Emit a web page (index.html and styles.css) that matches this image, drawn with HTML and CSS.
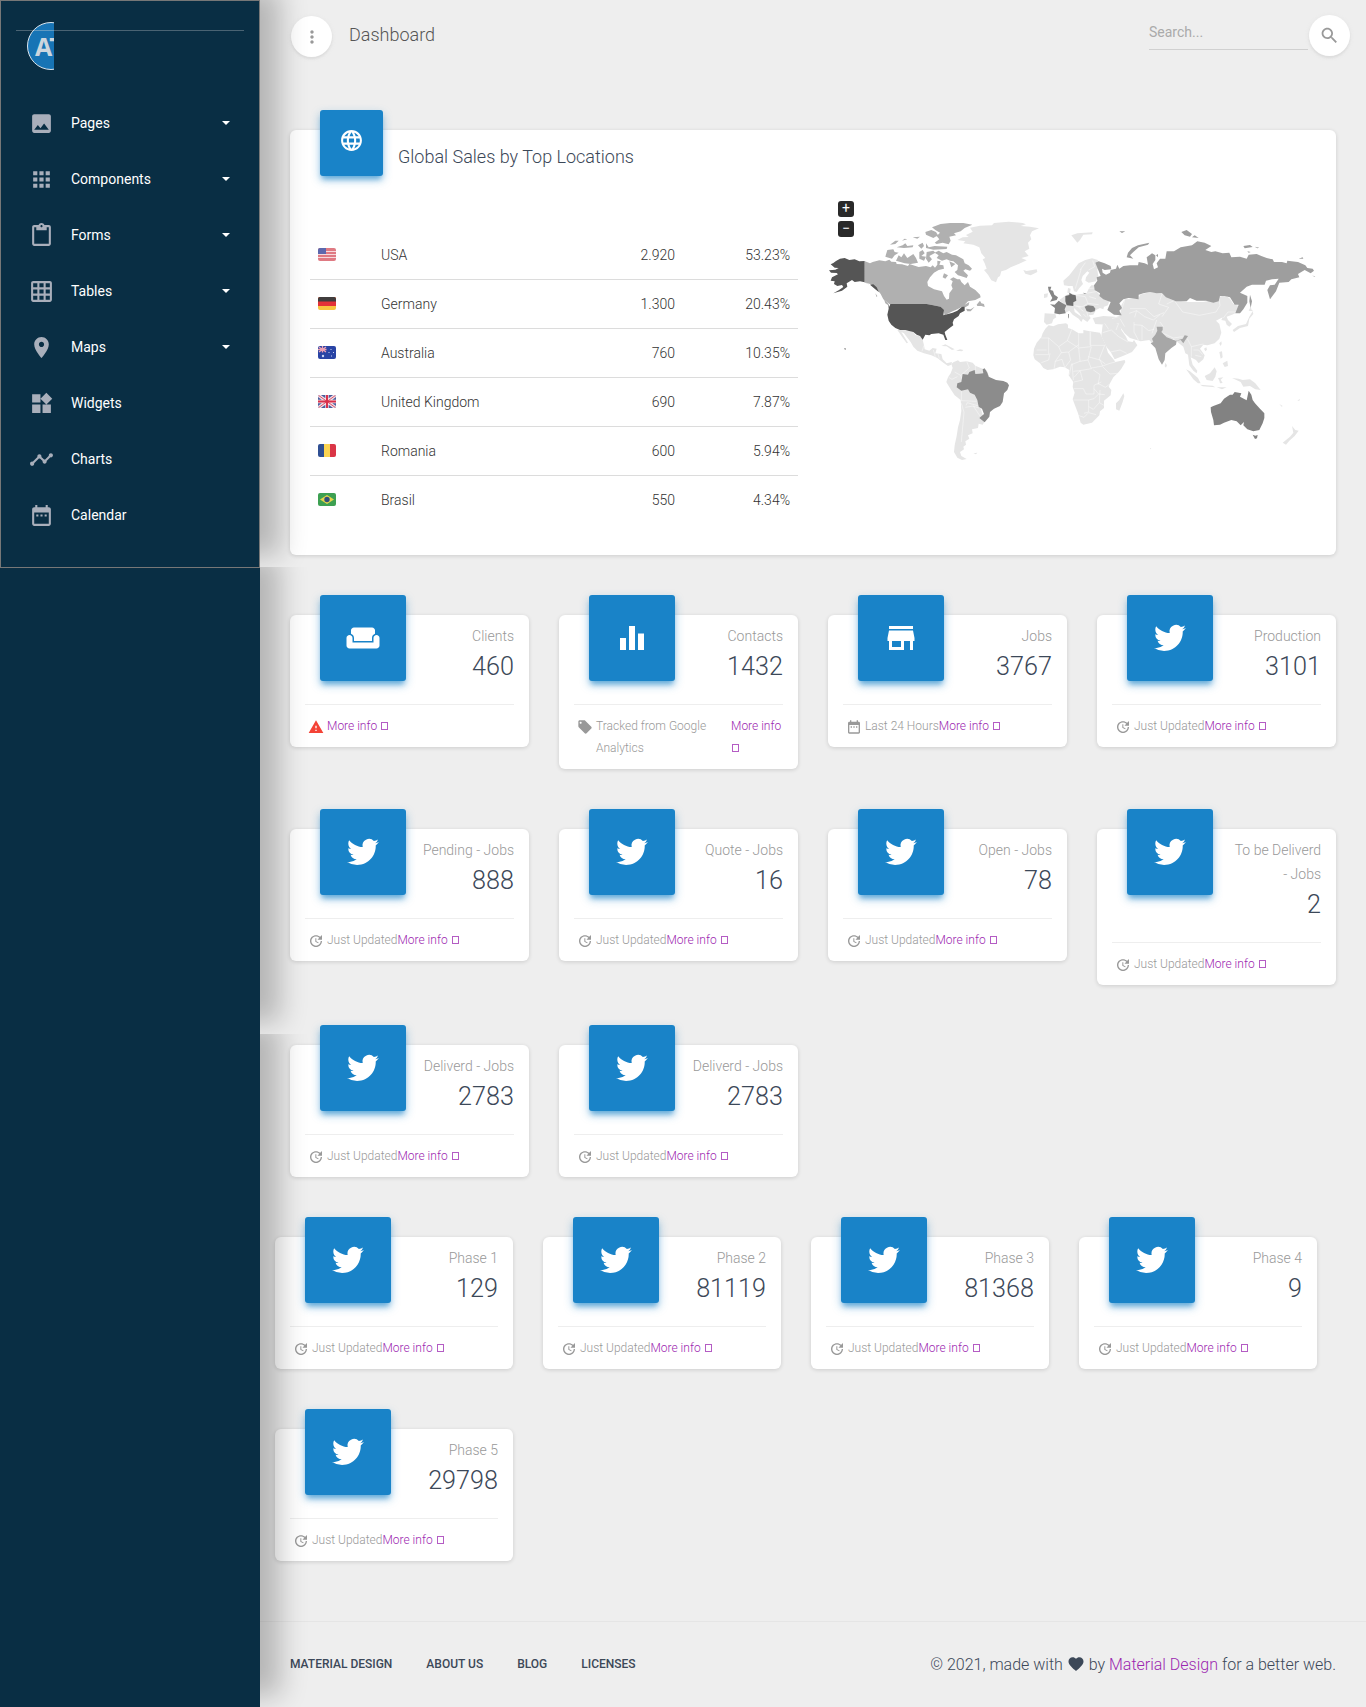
FILE: index.html
```html
<!DOCTYPE html>
<html lang="en">
<head>
<meta charset="utf-8">
<title>Dashboard</title>
<link rel="stylesheet" href="styles.css">
</head>
<body>
<svg class="sprite" aria-hidden="true">
  <symbol id="image" viewBox="0 0 24 24"><path d="M21 19V5c0-1.100-.9-2-2-2H5c-1.100 0-2 .9-2 2v14c0 1.100.9 2 2 2h14c1.100 0 2-.9 2-2zM8.500 13.500l2.500 3.010L14.500 12l4.500 6H5l3.500-4.500z"/></symbol>
  <symbol id="apps" viewBox="0 0 24 24"><path d="M4 8h4V4H4v4zm6 12h4v-4h-4v4zm-6 0h4v-4H4v4zm0-6h4v-4H4v4zm6 0h4v-4h-4v4zm6-10v4h4V4h-4zm-6 4h4V4h-4v4zm6 6h4v-4h-4v4zm0 6h4v-4h-4v4z"/></symbol>
  <symbol id="paste" viewBox="0 0 24 24"><path d="M19 2h-4.180C14.400.84 13.300 0 12 0c-1.300 0-2.400.84-2.820 2H5c-1.100 0-2 .9-2 2v16c0 1.100.9 2 2 2h14c1.100 0 2-.9 2-2V4c0-1.100-.9-2-2-2zm-7 0c.55 0 1 .45 1 1s-.45 1-1 1-1-.45-1-1 .45-1 1-1zm7 18H5V4h2v3h10V4h2v16z"/></symbol>
  <symbol id="grid" viewBox="0 0 24 24"><path d="M20 2H4c-1.100 0-2 .9-2 2v16c0 1.100.9 2 2 2h16c1.100 0 2-.9 2-2V4c0-1.100-.9-2-2-2zM8 20H4v-4h4v4zm0-6H4v-4h4v4zm0-6H4V4h4v4zm6 12h-4v-4h4v4zm0-6h-4v-4h4v4zm0-6h-4V4h4v4zm6 12h-4v-4h4v4zm0-6h-4v-4h4v4zm0-6h-4V4h4v4z"/></symbol>
  <symbol id="place" viewBox="0 0 24 24"><path d="M12 2C8.130 2 5 5.130 5 9c0 5.250 7 13 7 13s7-7.750 7-13c0-3.870-3.130-7-7-7zm0 9.500c-1.380 0-2.500-1.120-2.500-2.500s1.120-2.500 2.500-2.500 2.500 1.120 2.500 2.500-1.120 2.500-2.500 2.500z"/></symbol>
  <symbol id="widgets" viewBox="0 0 24 24"><path d="M13 13v8h8v-8h-8zM3 21h8v-8H3v8zM3 3v8h8V3H3zm13.660-1.310L11 7.340 16.660 13l5.660-5.660-5.660-5.650z"/></symbol>
  <symbol id="timeline" viewBox="0 0 24 24"><path d="M23 8c0 1.100-.9 2-2 2-.18 0-.35-.02-.51-.07l-3.560 3.550c.05.16.07.34.07.52 0 1.100-.9 2-2 2s-2-.9-2-2c0-.18.02-.36.07-.52l-2.550-2.550c-.16.05-.34.07-.52.07s-.36-.02-.52-.07l-4.550 4.560c.05.16.07.33.07.51 0 1.100-.9 2-2 2s-2-.9-2-2 .9-2 2-2c.18 0 .35.02.51.07l4.560-4.550C8.020 9.360 8 9.180 8 9c0-1.100.9-2 2-2s2 .9 2 2c0 .18-.02.36-.07.52l2.550 2.550c.16-.05.34-.07.52-.07s.36.02.52.07l3.550-3.560C19.020 8.350 19 8.180 19 8c0-1.100.9-2 2-2s2 .9 2 2z"/></symbol>
  <symbol id="date" viewBox="0 0 24 24"><path d="M9 11H7v2h2v-2zm4 0h-2v2h2v-2zm4 0h-2v2h2v-2zm2-7h-1V2h-2v2H8V2H6v2H5c-1.110 0-1.990.9-1.990 2L3 20c0 1.100.89 2 2 2h14c1.100 0 2-.9 2-2V6c0-1.100-.9-2-2-2zm0 16H5V9h14v11z"/></symbol>
  <symbol id="more" viewBox="0 0 24 24"><path d="M12 8c1.100 0 2-.9 2-2s-.9-2-2-2-2 .9-2 2 .9 2 2 2zm0 2c-1.100 0-2 .9-2 2s.9 2 2 2 2-.9 2-2-.9-2-2-2zm0 6c-1.100 0-2 .9-2 2s.9 2 2 2 2-.9 2-2-.9-2-2-2z"/></symbol>
  <symbol id="search" viewBox="0 0 24 24"><path d="M15.500 14h-.79l-.28-.27C15.410 12.590 16 11.110 16 9.500 16 5.910 13.090 3 9.500 3S3 5.910 3 9.500 5.910 16 9.500 16c1.610 0 3.090-.59 4.230-1.570l.27.28v.79l5 4.990L20.490 19l-4.990-5zm-6 0C7.010 14 5 11.990 5 9.500S7.010 5 9.500 5 14 7.010 14 9.500 11.990 14 9.500 14z"/></symbol>
  <symbol id="globe" viewBox="0 0 24 24"><path d="M11.990 2C6.470 2 2 6.480 2 12s4.470 10 9.990 10C17.520 22 22 17.520 22 12S17.520 2 11.990 2zm6.930 6h-2.950c-.32-1.250-.78-2.450-1.380-3.560 1.840.63 3.370 1.910 4.330 3.560zM12 4.040c.83 1.200 1.480 2.530 1.910 3.960h-3.820c.43-1.430 1.080-2.760 1.910-3.960zM4.260 14C4.100 13.360 4 12.690 4 12s.1-1.360.26-2h3.380c-.08.66-.14 1.320-.14 2 0 .68.06 1.340.14 2H4.260zm.82 2h2.950c.32 1.250.78 2.450 1.380 3.560-1.840-.63-3.370-1.900-4.330-3.560zm2.950-8H5.080c.96-1.660 2.490-2.930 4.330-3.560C8.810 5.550 8.350 6.750 8.030 8zM12 19.960c-.83-1.200-1.480-2.530-1.910-3.960h3.820c-.43 1.430-1.080 2.760-1.910 3.960zM14.340 14H9.660c-.09-.66-.16-1.320-.16-2 0-.68.07-1.350.16-2h4.680c.09.65.16 1.320.16 2 0 .68-.07 1.340-.16 2zm.25 5.560c.6-1.110 1.060-2.310 1.380-3.560h2.950c-.96 1.650-2.490 2.930-4.330 3.560zM16.360 14c.08-.66.14-1.320.14-2 0-.68-.06-1.340-.14-2h3.380c.16.64.26 1.310.26 2s-.1 1.360-.26 2h-3.380z"/></symbol>
  <symbol id="weekend" viewBox="0 0 24 24"><path d="M21 10c-1.100 0-2 .9-2 2v3H5v-3c0-1.100-.9-2-2-2s-2 .9-2 2v5c0 1.100.9 2 2 2h18c1.100 0 2-.9 2-2v-5c0-1.100-.9-2-2-2zm-3-5H6c-1.100 0-2 .9-2 2v2.150c1.160.41 2 1.510 2 2.820V14h12v-2.030c0-1.300.84-2.400 2-2.820V7c0-1.100-.9-2-2-2z"/></symbol>
  <symbol id="equalizer" viewBox="0 0 24 24"><path d="M10 20h4V4h-4v16zm-6 0h4v-8H4v8zM16 9v11h4V9h-4z"/></symbol>
  <symbol id="store" viewBox="0 0 24 24"><path d="M20 4H4v2h16V4zm1 10v-2l-1-5H4l-1 5v2h1v6h10v-6h4v6h2v-6h1zm-9 4H6v-4h6v4z"/></symbol>
  <symbol id="bird" viewBox="0 0 24 24"><path d="M23.950 4.570a10 10 0 01-2.820.78 4.960 4.960 0 002.160-2.730c-.95.56-2 .96-3.120 1.190a4.920 4.920 0 00-8.390 4.480C7.690 8.100 4.070 6.130 1.640 3.160a4.820 4.820 0 00-.67 2.480c0 1.710.87 3.210 2.190 4.090a4.900 4.900 0 01-2.230-.61v.06a4.920 4.920 0 003.950 4.820 5 5 0 01-2.210.09 4.940 4.940 0 004.600 3.420A9.870 9.870 0 010 19.540a14 14 0 007.550 2.210c9.050 0 14-7.500 14-13.990 0-.21 0-.42-.02-.63a9.940 9.940 0 002.420-2.560z"/></symbol>
  <symbol id="warning" viewBox="0 0 24 24"><path d="M1 21h22L12 2 1 21zm12-3h-2v-2h2v2zm0-4h-2v-4h2v4z"/></symbol>
  <symbol id="tag" viewBox="0 0 24 24"><path d="M21.410 11.580l-9-9C12.050 2.220 11.550 2 11 2H4c-1.100 0-2 .9-2 2v7c0 .55.22 1.050.59 1.420l9 9c.36.36.86.58 1.410.58.55 0 1.050-.22 1.410-.59l7-7c.37-.36.59-.86.59-1.410 0-.55-.23-1.060-.59-1.420zM5.500 7C4.670 7 4 6.330 4 5.500S4.670 4 5.500 4 7 4.670 7 5.500 6.330 7 5.500 7z"/></symbol>
  <symbol id="update" viewBox="0 0 24 24"><path d="M21 10.120h-6.780l2.740-2.820c-2.730-2.700-7.150-2.800-9.880-.1-2.730 2.710-2.730 7.080 0 9.790 2.730 2.710 7.150 2.710 9.880 0C18.320 15.650 19 14.080 19 12.100h2c0 1.980-.88 4.550-2.640 6.290-3.510 3.480-9.210 3.480-12.720 0-3.500-3.470-3.530-9.110-.02-12.580 3.510-3.470 9.140-3.470 12.650 0L21 3v7.120zM12.500 8v4.250l3.500 2.080-.72 1.210L11 13V8h1.500z"/></symbol>
  <symbol id="heart" viewBox="0 0 24 24"><path d="M12 21.350l-1.450-1.320C5.400 15.360 2 12.280 2 8.500 2 5.420 4.420 3 7.500 3c1.740 0 3.410.81 4.500 2.090C13.090 3.810 14.760 3 16.500 3 19.580 3 22 5.420 22 8.500c0 3.780-3.400 6.860-8.550 11.540L12 21.350z"/></symbol>
</svg>

<div class="layout">
  <aside class="sidebar">
    <div class="sidebar-shade shade-first"></div>
    <div class="sidebar-shade shade-second"></div>
    <div class="sidebar-shade shade-third"></div>
    <div class="sidebar-panel">
      <div class="brand"><div class="logo"><span class="logo-disc">AT</span></div></div>
      <nav class="nav">
        <a class="nav-item"><svg><use href="#image"/></svg><span>Pages</span><i class="caret"></i></a>
        <a class="nav-item"><svg><use href="#apps"/></svg><span>Components</span><i class="caret"></i></a>
        <a class="nav-item"><svg><use href="#paste"/></svg><span>Forms</span><i class="caret"></i></a>
        <a class="nav-item"><svg><use href="#grid"/></svg><span>Tables</span><i class="caret"></i></a>
        <a class="nav-item"><svg><use href="#place"/></svg><span>Maps</span><i class="caret"></i></a>
        <a class="nav-item"><svg><use href="#widgets"/></svg><span>Widgets</span></a>
        <a class="nav-item"><svg><use href="#timeline"/></svg><span>Charts</span></a>
        <a class="nav-item"><svg><use href="#date"/></svg><span>Calendar</span></a>
      </nav>
    </div>
  </aside>

  <main class="main">
    <header class="topbar">
      <button class="round menu"><svg><use href="#more"/></svg></button>
      <h1>Dashboard</h1>
      <div class="search">Search...</div>
      <button class="round"><svg class="find"><use href="#search"/></svg></button>
    </header>

    <section class="sales card">
      <div class="sales-head">
        <div class="tile tile-small"><svg><use href="#globe"/></svg></div>
        <h2>Global Sales by Top Locations</h2>
      </div>
      <div class="sales-body">
        <div class="table">
          <div class="row"><svg class="flag" viewBox="0 0 18 13"><rect width="18" height="13" fill="#df7a83"/><path d="M0 3.500h18M0 6.500h18M0 9.500h18" stroke="#f6dadd" stroke-width="1.200"/><rect width="8" height="6" fill="#5d68ad"/></svg><span class="name">USA</span><span>2.920</span><span>53.23%</span></div>
          <div class="row"><svg class="flag" viewBox="0 0 18 13"><rect width="18" height="13" fill="#f8c540"/><rect width="18" height="9" fill="#e33238"/><rect width="18" height="4.500" fill="#403d3d"/></svg><span class="name">Germany</span><span>1.300</span><span>20.43%</span></div>
          <div class="row"><svg class="flag" viewBox="0 0 18 13"><rect width="18" height="13" fill="#2944a5"/><path d="M1 1l7 5M8 1L1 6M4.500 0v6.500M0 3.500h8.500" stroke="#eba0b4" stroke-width="1.300"/><circle cx="5" cy="10" r="1.200" fill="#ccd5f2"/><path d="M13 3v1M11 6v1M15.500 6v1M13.500 9.500v1" stroke="#ccd5f2"/></svg><span class="name">Australia</span><span>760</span><span>10.35%</span></div>
          <div class="row"><svg class="flag" viewBox="0 0 18 13"><rect width="18" height="13" fill="#4c5e9e"/><path d="M0 0l18 13M18 0L0 13M9 0v13M0 6.500h18" stroke="#f2dfe5" stroke-width="3.400"/><path d="M0 0l18 13M18 0L0 13" stroke="#d9425c" stroke-width=".9"/><path d="M9 0v13M0 6.500h18" stroke="#d9304b" stroke-width="2"/></svg><span class="name">United Kingdom</span><span>690</span><span>7.87%</span></div>
          <div class="row"><svg class="flag" viewBox="0 0 18 13"><rect width="6" height="13" fill="#2f4f93"/><rect x="6" width="6" height="13" fill="#fbd452"/><rect x="12" width="6" height="13" fill="#da3546"/></svg><span class="name">Romania</span><span>600</span><span>5.94%</span></div>
          <div class="row"><svg class="flag" viewBox="0 0 18 13"><rect width="18" height="13" fill="#3da052"/><path d="M9 2l7 4.500L9 11 2 6.500z" fill="#e6d44b"/><circle cx="9" cy="6.500" r="2.700" fill="#304f7a"/></svg><span class="name">Brasil</span><span>550</span><span>4.34%</span></div>
        </div>
        <div class="map">
          <svg viewBox="0 0 1530 870">
            <g class="land">
              <path d="M232 420L256 421 280 427 286 435 300 439 308 449 312 466 314 478 328 482 338 474 350 476 346 490 364 492 368 508 380 520 396 516 394 524 384 528 370 518 352 504 334 496 312 490 292 482 280 470 272 456 252 430 244 426 264 458 260 460 246 440Z"/>
              <path d="M364 468L376 463 404 478 396 480 380 469ZM408 482L420 478 430 480 426 484ZM460 790l12-2-4 5z"/>
              <path d="M394 522L400 517 414 511 420 516 440 514 458 518 466 527 484 535 500 541 508 560 500 620 480 648 494 694 488 704 476 701 474 714 456 718 458 730 444 736 448 746 436 754 438 764 430 770 432 778 420 786 424 798 440 807 426 810 412 803 402 786 404 766 410 738 414 712 420 690 424 662 422 630 404 616 396 604 386 588 379 576 384 562 392 550 398 534Z"/>
              <path d="M412 150L428 142 446 141 438 135 458 125 450 113 480 107 516 106 522 99 566 95 608 99 618 103 602 108 630 110 657 115 636 124 630 136 634 148 624 158 628 176 614 184 626 198 604 204 620 211 596 222 572 232 558 240 544 244 540 258 534 262 528 277 514 271 504 254 492 240 500 236 494 220 488 208 496 204 484 190 478 172 460 164 430 160 436 154Z"/>
              <path d="M610 240L620 243 650 238 652 246 632 256 616 251ZM672 312l12-2-2 12-10 2z"/>
              <path d="M674 370L706 372 709 382 700 388 696 400 680 404 672 396Z"/>
              <path d="M732 286L730 272 748 256 762 238 776 220 796 210 816 205 834 210 832 218 840 224 832 240 835 258 828 274 806 278 796 272 798 262 808 248 802 244 788 258 784 270 789 282 778 294 770 306 762 304 758 288 746 288ZM744 294l8 2-2 14-8-2z"/>
              <path d="M718 330L738 316 750 310 768 314 800 310 806 296 814 286 826 286 828 302 842 318 868 332 864 346 852 350 850 358 840 354 828 360 820 374 806 376 812 384 802 396 790 388 778 370 762 354 764 366 790 384 784 396 776 386 758 374 748 362 734 370 736 346Z"/>
              <path d="M818 384L850 378 884 380 902 386 898 398 858 404 826 402Z"/>
              <path d="M676 416L686 406 700 409 714 403 738 400 744 404 744 414 756 418 776 430 790 430 790 420 810 424 840 428 846 442 856 462 864 488 882 510 886 516 914 510 916 516 904 536 896 546 880 562 870 580 866 590 874 600 872 616 852 632 852 654 840 664 838 676 816 698 790 704 782 698 774 670 768 654 758 628 764 608 758 590 760 576 746 556 748 540 734 532 720 530 700 538 682 540 670 534 660 520 644 508 640 496 642 476 650 458 664 442 668 430Z"/>
              <path d="M888 640L898 630 910 610 913 618 908 636 898 662 888 658Z"/>
              <path d="M848 404L856 399 880 397 900 402 904 420 918 440 924 454 938 456 942 450 952 466 936 486 914 496 884 508 872 486 860 472 844 438Z"/>
              <path d="M888 382L902 374 902 350 914 328 956 326 960 314 990 306 1026 312 1066 330 1100 336 1150 336 1196 326 1198 320 1216 316 1230 326 1240 342 1258 348 1254 366 1236 374 1220 380 1224 390 1236 402 1228 410 1220 404 1216 392 1204 390 1208 382 1188 392 1198 402 1204 428 1198 446 1184 460 1162 466 1150 464 1140 476 1154 496 1150 508 1136 520 1128 510 1112 502 1118 524 1132 542 1130 550 1120 542 1108 526 1104 494 1096 490 1090 470 1060 446 1020 456 996 460 988 450 962 454 930 444 914 430 900 410 892 396Z"/>
              <path d="M1036 518l5 8-3 7-4-4zM1152 476l7-4 2 7-5 5zM1198 460l6-6 1 8-4 6z"/>
              <path d="M1098 538L1110 544 1134 564 1142 580 1134 580 1120 568 1106 548ZM1140 584L1178 587 1186 592 1148 589ZM1154 558L1170 550 1184 532 1190 544 1186 560 1178 573 1160 570ZM1194 564l16-2-8 7 6 10-8 1-2-8zM1190 592l30 0-14 6zM1236 564L1256 566 1268 570 1290 568 1306 580 1322 600 1306 598 1290 588 1270 590 1262 576ZM1198 486l8-2 2 18-6 4zM1208 520l14-8 2 16-10 3z"/>
              <path d="M1238 420L1254 408 1278 402 1288 380 1298 364 1300 372 1288 386 1284 408 1260 414 1242 426ZM1286 362l6-12 3 10 6 4z"/>
              <path d="M1416 708L1426 720 1436 722 1424 738 1408 752 1398 764 1388 758 1410 740 1420 728Z"/>
              <path d="M754 136L772 130 818 127 816 133 790 134 780 150 772 158ZM1378 642l10 6-3 2zM1432 632l8-6-2 6zM990 774l4 2-4 2z"/>
            </g>
            <g class="borders">
              <path d="M404 546l18 10 6 18-18 14M424 602l0 30 46 2M424 640l8 26-8 90M436 652l24-4 16 6M438 646l4-8 34 10M460 648l20 30M466 526l0 14M440 514l8 20-26 22M386 562l10 6 16-8M312 466l-6 18M340 480l6 20M354 492l4 14"/>
              <path d="M686 444l30 26 26-18 14-36M686 444l-22 0M686 444l0 50-40 0M690 490l-4 20-22 8M716 470l8 18 22-2 30-22M742 452l34 22 36-4 0-44M776 430l0 42M724 488l-18 26-4 24M746 486l6 24-20 26M706 514l20-6 8 24M812 466l42 0M776 474l4 40 24-4 10-40M780 514l-26 10-6 30M804 510l10 26-34 6-18 20M804 500l36 10 16 12M854 466l-16 40 10 22 22-8 16-4M848 528l-34 6M848 530l22 22 22-2M820 540l20 14-6 30M780 542l8 28-26 6M762 596l28 0 8 16 24 0 0-26 22-10M834 580l22 12 14-10M760 630l46 0 0 36-14 4M806 630l16-4 14-14 18 2M806 650l14 8 18-20 14 8M774 676l18 6 14-14 22 6M822 596l14 16M840 600l-2 38M760 544l20-2M756 520l4 50M650 480l30 0M810 424l0 42"/>
              <path d="M848 428l26-8 22 20 28 16M872 486l28-6 20 10M854 400l12 18M896 400l-8 20M900 386l14 24M942 404l24 2 20 16 16-4M942 396l0 30 14 26M966 406l0 44M928 370l22-8 24 18 26 10 20-16M914 330l-8 26M930 356l46 0 26 24 30-12M950 362l-6 20M1026 312l-10 30 30 10-20 28M1040 342l22-10M1066 336l22 30 50 10 50-10 12-20M1200 346l-4-24M1010 390l-14 40M1020 396l10 14M1030 430l30 14 28-4M1102 446l12 24 18-4 18-4M1114 470l0 30M1120 480l16 0 12 14M1126 496l18 4M1210 384l14-18 30 0"/>
              <path d="M768 316l28 4 8 20-16 10-20-2M804 340l32 4M800 310l32-6M760 346l24 6M784 236l-18 60M796 218l-16 22M818 212l6 18-18 10M804 296l22-2M828 326l-20-6M790 372l10 10M800 364l4 16M774 350l16 14M876 386l20-6"/>
            </g>
            <g class="canada">
              <path d="M135 214L150 220 158 216 178 211 196 214 208 209 214 215 228 216 230 222 246 223 264 228 268 222 296 231 318 228 332 232 338 226 345 233 352 224 352 212 362 214 358 224 370 226 372 236 356 240 342 248 330 262 322 276 324 288 342 298 366 304 372 318 380 329 387 326 388 310 398 296 394 286 398 274 390 268 400 262 412 268 420 268 424 276 434 286 444 276 450 290 466 300 480 314 482 322 466 330 444 334 434 344 448 336 446 346 436 352 426 350 412 358 398 364 374 376 370 360 362 350 340 346 320 342 208 342 190 328 182 312 166 292 150 282 135 277Z"/>
              <path d="M470 344l10-12 4 8 8 2 2 9-10-3-12 0zM438 356l14 2 12-8-12 14-10 0zM192 328l12 12 4 8-12-8zM166 310l6 8-2 4z"/>
              <path d="M344 188L356 182 370 190 380 186 396 194 408 196 430 208 434 220 446 226 456 236 450 242 436 238 430 242 444 256 440 264 422 258 414 256 404 246 412 240 414 226 400 214 390 212 380 208 366 212 350 204 356 196Z"/>
              <path d="M336 112L362 102 390 99 430 99 457 104 434 114 422 124 402 130 408 136 388 140 392 152 386 163 368 158 350 162 344 158 358 148 350 138 360 128 346 120ZM316 126L334 120 348 126 354 136 340 144 318 134ZM318 160L326 172 344 168 382 170 380 177 340 179 318 174Z"/>
              <path d="M202 180l18-2 4 8 12 2-12 8-8 10-20-6zM228 212l8-16 8 6 8-12 10 14 18-12 8 12 6 14-22 4-18-2zM210 164l16-12 10 0-10 10zM230 172l18-6 8-6 6 8 18-2-2 6-26 2zM246 152l8-6 8 2zM278 142l22-2-8 6zM294 166l14-8 4 10-8 8zM298 186l10-6 6 10-10 8 14 2-6 12-14-6zM320 186l20-4 6 6-18 10 8 10-10 10-8-12zM372 250l12 6-8 10-8-4zM388 214l18 8-12 10z"/>
            </g>
            <path class="usa" d="M134 213L118 214 104 208 88 210 74 204 60 206 48 213 40 219 32 223 44 233 56 234 46 239 27 241 33 248 50 249 54 253 36 262 32 272 44 274 42 282 52 288 66 285 70 291 56 301 40 310 66 302 82 290 80 280 96 270 104 276 120 274 134 277 150 284 164 296 177 307 170 292 160 283 150 284 134 276ZM205 342L208 350 211 342 320 342 340 346 362 350 372 360 370 376 398 368 412 362 426 350 434 350 434 362 420 370 416 378 402 388 398 398 400 406 386 416 374 426 376 434 382 450 376 450 370 434 356 430 334 432 328 436 316 434 308 449 300 438 290 434 280 426 270 424 256 420 240 420 226 414 214 404 206 392 202 374 206 356ZM73 474l5 2-3 4z"/>
            <path class="brazil" d="M428 552L444 554 448 546 464 540 466 552 478 551 490 550 488 538 494 535 502 548 506 560 528 570 550 573 562 578 567 586 562 600 552 610 548 636 540 648 522 656 510 666 508 680 494 697 478 684 492 672 486 656 476 650 472 630 464 614 450 608 444 598 424 602 410 592 412 580 424 576Z"/>
            <path class="britain" d="M684 290L694 290 691 300 699 302 703 314 714 322 710 330 690 335 697 324 692 314 686 302ZM690 343L704 344 716 332 728 340 739 346 734 358 737 370 718 373 703 370 705 354Z"/>
            <path class="germany" d="M736 318L748 315 748 308 758 314 767 316 769 332 760 337 760 348 740 346 736 334ZM745 372l2 0 0 10-2 4z"/>
            <path class="britain" d="M794 350L804 346 820 348 826 356 824 364 812 367 800 364Z"/>
            <path class="india" d="M992 460L1000 456 996 446 1006 434 1012 422 1010 410 1028 410 1028 420 1024 426 1040 442 1068 452 1088 446 1094 436 1104 438 1096 450 1090 460 1082 450 1070 452 1068 464 1054 474 1036 490 1034 510 1026 524 1016 508 1006 474Z"/>
            <g class="russia" transform="translate(750 0)">
              <path d="M76 218L86 214 104 220 122 228 124 238 104 240 96 236 98 248 108 254 120 248 122 240 138 236 142 224 148 236 160 228 180 226 204 226 206 216 224 220 234 224 230 202 246 190 256 196 256 210 248 222 252 238 264 232 260 220 270 206 286 206 290 184 312 184 332 172 366 166 382 154 404 158 424 168 406 180 424 186 436 184 458 190 478 188 484 202 510 200 530 206 536 194 560 192 574 198 590 204 608 208 612 216 636 216 650 220 652 212 684 216 706 226 712 234 728 236 732 242 722 250 704 240 684 252 688 262 664 268 656 276 628 278 618 304 600 328 592 300 600 286 614 284 626 266 606 268 588 272 584 284 546 284 530 290 510 308 532 318 532 338 520 358 510 370 496 370 506 344 494 344 480 322 464 318 450 318 446 334 430 338 408 332 380 332 360 324 350 334 318 334 288 322 276 310 260 310 240 306 220 310 206 314 206 328 176 324 160 328 148 340 156 354 148 362 155 376 132 374 112 360 122 336 100 328 88 318 90 310 74 300 72 286 82 272 80 262 92 258Z"/>
              <path d="M170 202L174 188 186 174 204 166 238 158 234 164 206 172 190 186 180 196 190 206ZM334 126L350 120 366 132 360 140 344 136ZM366 142L374 136 386 144ZM520 168l20-3 8 6-24 4zM554 170l14 3-6 2zM532 184l10 2-6 2zM258 196l6-4 0 10zM540 314l6 20-4 20-4-20zM148 124l18 0-10 5zM686 206l12-4 2 4zM726 256l10 4-2 1zM38 308l12 2-6 2z"/>
            </g>
            <path class="australia" transform="translate(750 0)" d="M422 652L430 648 452 640 462 626 474 618 480 614 488 614 494 606 514 610 510 620 530 631 536 602 544 614 548 630 555 640 570 656 583 670 583 684 578 700 568 720 550 724 532 718 520 706 522 696 512 706 500 694 484 690 462 698 450 704 432 706 430 690 423 666ZM548 734l8 3 7-2-2 10-6 2z"/>
          </svg>
          <div class="zoom-in">+</div><div class="zoom-out">−</div>
        </div>
      </div>
    </section>

    <section class="stats">
      <article class="card stat"><div class="stat-head"><div class="tile"><svg><use href="#weekend"/></svg></div><div class="figures"><p>Clients</p><h3>460</h3></div></div><div class="stat-foot"><svg class="danger"><use href="#warning"/></svg><a>More info <i class="box"></i></a></div></article>
      <article class="card stat"><div class="stat-head"><div class="tile"><svg><use href="#equalizer"/></svg></div><div class="figures"><p>Contacts</p><h3>1432</h3></div></div><div class="stat-foot"><svg><use href="#tag"/></svg><span class="long">Tracked from Google Analytics</span><a>More info <i class="box"></i></a></div></article>
      <article class="card stat"><div class="stat-head"><div class="tile"><svg><use href="#store"/></svg></div><div class="figures"><p>Jobs</p><h3>3767</h3></div></div><div class="stat-foot"><svg><use href="#date"/></svg><span>Last 24 Hours</span><a>More info <i class="box"></i></a></div></article>
      <article class="card stat"><div class="stat-head"><div class="tile"><svg class="bird"><use href="#bird"/></svg></div><div class="figures"><p>Production</p><h3>3101</h3></div></div><div class="stat-foot"><svg><use href="#update"/></svg><span>Just Updated</span><a>More info <i class="box"></i></a></div></article>
    </section>
    <section class="stats">
      <article class="card stat"><div class="stat-head"><div class="tile"><svg class="bird"><use href="#bird"/></svg></div><div class="figures"><p>Pending - Jobs</p><h3>888</h3></div></div><div class="stat-foot"><svg><use href="#update"/></svg><span>Just Updated</span><a>More info <i class="box"></i></a></div></article>
      <article class="card stat"><div class="stat-head"><div class="tile"><svg class="bird"><use href="#bird"/></svg></div><div class="figures"><p>Quote - Jobs</p><h3>16</h3></div></div><div class="stat-foot"><svg><use href="#update"/></svg><span>Just Updated</span><a>More info <i class="box"></i></a></div></article>
      <article class="card stat"><div class="stat-head"><div class="tile"><svg class="bird"><use href="#bird"/></svg></div><div class="figures"><p>Open - Jobs</p><h3>78</h3></div></div><div class="stat-foot"><svg><use href="#update"/></svg><span>Just Updated</span><a>More info <i class="box"></i></a></div></article>
      <article class="card stat"><div class="stat-head"><div class="tile"><svg class="bird"><use href="#bird"/></svg></div><div class="figures"><p>To be Deliverd - Jobs</p><h3>2</h3></div></div><div class="stat-foot"><svg><use href="#update"/></svg><span>Just Updated</span><a>More info <i class="box"></i></a></div></article>
    </section>
    <section class="stats">
      <article class="card stat"><div class="stat-head"><div class="tile"><svg class="bird"><use href="#bird"/></svg></div><div class="figures"><p>Deliverd - Jobs</p><h3>2783</h3></div></div><div class="stat-foot"><svg><use href="#update"/></svg><span>Just Updated</span><a>More info <i class="box"></i></a></div></article>
      <article class="card stat"><div class="stat-head"><div class="tile"><svg class="bird"><use href="#bird"/></svg></div><div class="figures"><p>Deliverd - Jobs</p><h3>2783</h3></div></div><div class="stat-foot"><svg><use href="#update"/></svg><span>Just Updated</span><a>More info <i class="box"></i></a></div></article>
    </section>
    <section class="stats phases">
      <article class="card stat"><div class="stat-head"><div class="tile"><svg class="bird"><use href="#bird"/></svg></div><div class="figures"><p>Phase 1</p><h3>129</h3></div></div><div class="stat-foot"><svg><use href="#update"/></svg><span>Just Updated</span><a>More info <i class="box"></i></a></div></article>
      <article class="card stat"><div class="stat-head"><div class="tile"><svg class="bird"><use href="#bird"/></svg></div><div class="figures"><p>Phase 2</p><h3>81119</h3></div></div><div class="stat-foot"><svg><use href="#update"/></svg><span>Just Updated</span><a>More info <i class="box"></i></a></div></article>
      <article class="card stat"><div class="stat-head"><div class="tile"><svg class="bird"><use href="#bird"/></svg></div><div class="figures"><p>Phase 3</p><h3>81368</h3></div></div><div class="stat-foot"><svg><use href="#update"/></svg><span>Just Updated</span><a>More info <i class="box"></i></a></div></article>
      <article class="card stat"><div class="stat-head"><div class="tile"><svg class="bird"><use href="#bird"/></svg></div><div class="figures"><p>Phase 4</p><h3>9</h3></div></div><div class="stat-foot"><svg><use href="#update"/></svg><span>Just Updated</span><a>More info <i class="box"></i></a></div></article>
      <article class="card stat"><div class="stat-head"><div class="tile"><svg class="bird"><use href="#bird"/></svg></div><div class="figures"><p>Phase 5</p><h3>29798</h3></div></div><div class="stat-foot"><svg><use href="#update"/></svg><span>Just Updated</span><a>More info <i class="box"></i></a></div></article>
    </section>

    <footer class="footer">
      <nav><a>Material Design</a><a>About us</a><a>Blog</a><a>Licenses</a></nav>
      <p>© 2021, made with <svg><use href="#heart"/></svg> by <a>Material Design</a> for a better web.</p>
    </footer>
  </main>
</div>
</body>
</html>
```

FILE: styles.css
```css
* { box-sizing: border-box; }
body { margin: 0; background: #eee; color: #3c4858; font-family: Roboto, "Liberation Sans", sans-serif; font-weight: 300; font-size: 14px; }
h1, h2, h3, p { margin: 0; font-weight: 300; }
svg { fill: currentColor; display: block; flex: none; }
.sprite { display: none; }
.layout { display: grid; grid-template-columns: 260px 1fr; height: 1707px; overflow: hidden; }

/* sidebar */
.sidebar { position: relative; z-index: 2; background: #092e44; }
.sidebar-shade { position: absolute; left: 0; width: 260px; z-index: -1; clip-path: inset(0 -60px 0 0); box-shadow: 20px -11px 26px rgba(0,0,0,.24); }
.shade-first { top: 0; height: 567px; }
.shade-second { top: 567px; height: 467px; }
.shade-third { top: 1034px; height: 673px; }
.sidebar-panel { height: 568px; border: 1px solid #777; background: #092e44; color: #fff; }
.brand { height: 94px; margin: 0 15px; padding: 21px 0 0 11px; background: linear-gradient(#4a6373, #4a6373) 0 29px / 100% 1px no-repeat; }
.logo { width: 27px; height: 48px; overflow: hidden; }
.logo-disc { display: block; width: 48px; height: 48px; padding-left: 7px; border: 1px solid #dce6ee; border-radius: 50%; background: linear-gradient(#5f9ac2, #5f9ac2) 0 7px / 100% 1px no-repeat #1774b5; color: #ccd6de; font: 700 25px/46px "Open Sans", sans-serif; letter-spacing: -3px; }
.nav-item { display: flex; align-items: center; height: 56px; padding: 0 29px 0 28px; font-weight: 400; }
.nav-item svg { width: 25px; height: 25px; margin-right: 17px; color: #a9afbb; }
.nav-item span { flex: 1; }
.caret { border: 4px solid transparent; border-top-color: #fff; border-bottom: 0; }

/* top bar */
.main { min-width: 0; }
.topbar { display: flex; align-items: flex-start; height: 130px; padding: 15px 16px 0 31px; }
.round { display: flex; align-items: center; justify-content: center; width: 41px; height: 41px; padding: 0; border: 0; border-radius: 50%; background: #fff; color: #999; box-shadow: 0 2px 2px rgba(153,153,153,.14), 0 1px 5px rgba(153,153,153,.12); }
.round svg { width: 20px; height: 20px; }
.round .find { width: 21px; height: 21px; }
.menu { margin-top: 1px; }
.topbar h1 { flex: 1; margin-left: 17px; font-size: 18px; line-height: 40px; color: #555; }
.search { width: 159px; height: 35px; margin-right: 1px; border-bottom: 1px solid #d0d0d0; color: #aaa; font-weight: 400; line-height: 34px; }

/* cards */
.card { border-radius: 6px; background: #fff; box-shadow: 0 1px 4px rgba(0,0,0,.14); }
.tile { display: flex; align-items: center; justify-content: center; width: 86px; height: 86px; margin: -20px 15px 0; border-radius: 3px; background: #1983c8; color: #fff; box-shadow: 0 4px 10px rgba(25,131,200,.4), 0 5px 5px -2px rgba(25,131,200,.5); flex: none; }
.tile svg { width: 36px; height: 36px; }
.tile .bird { width: 32px; height: 32px; }
.sales { height: 425px; margin: 0 30px; padding: 0 15px; }
.sales-head { display: flex; height: 60px; }
.tile-small { width: 63px; height: 66px; padding-bottom: 5px; }
.tile-small svg { width: 25px; height: 25px; }
.sales-head h2 { font-size: 18px; line-height: 54px; }
.sales-body { display: flex; padding-left: 5px; }
.table { flex: none; width: 488px; margin-top: 41px; color: #333; }
.row { display: grid; grid-template-columns: 63px 186px 108px 115px; align-items: center; height: 49px; padding: 0 0 1px 8px; border-bottom: 1px solid #dcdcdc; text-align: right; }
.row:last-child { border-bottom-color: transparent; }
.row .name { text-align: left; }
.flag { width: 18px; height: 13px; border-radius: 2px; }
.map { position: relative; flex: none; width: 510px; height: 290px; margin-left: 22px; }
.map svg { width: 510px; height: 290px; }
.land { fill: #e5e5e5; }
.borders { fill: none; stroke: #fff; stroke-width: 1.3; stroke-linejoin: round; }
.canada { fill: #b0b0b0; }
.usa { fill: #555; }
.brazil { fill: #8c8c8c; }
.britain { fill: #868686; }
.germany { fill: #6e6e6e; }
.india { fill: #a7a7a7; }
.russia { fill: #9e9e9e; }
.australia { fill: #828282; }
.zoom-in, .zoom-out { position: absolute; left: 18px; width: 16px; height: 16px; border-radius: 3px; background: #292929; color: #fff; font-weight: 400; line-height: 15px; text-align: center; }
.zoom-in { top: 11px; }
.zoom-out { top: 31px; }

.stats { display: flex; flex-wrap: wrap; align-items: flex-start; gap: 60px 30px; margin: 60px 30px 0; }
.phases { margin-left: 15px; }
.stat { width: 239px; padding: 0 15px; }
.phases .stat { width: 238px; }
.stat-head { display: flex; padding-bottom: 20px; }
.figures { flex: 1; padding-top: 9px; text-align: right; }
.figures p { color: #999; line-height: 24px; }
.figures h3 { padding-top: 1px; font-size: 25.2px; line-height: 35px; }
.stat-foot { display: flex; padding: 10px 0 10px 3px; border-top: 1px solid #eee; color: #999; font-size: 12px; line-height: 22px; }
.stat-foot svg { width: 16px; height: 16px; margin: 4px 3px 0 0; }
.stat-foot .danger { color: #f44336; }
.stat-foot .long { width: 135px; flex: none; }
.stat-foot a, .footer p a { color: #9c27b0; }
.box { display: inline-block; width: 7px; height: 8px; margin-left: 1px; border: 1px solid #b45cc4; vertical-align: 0; }

.footer { display: flex; justify-content: space-between; align-items: center; height: 86px; margin-top: 60px; padding: 0 30px; border-top: 1px solid #e5e5e5; }
.footer nav { display: flex; gap: 34px; padding-bottom: 2px; font-size: 12px; font-weight: 500; text-transform: uppercase; }
.footer p { font-size: 16px; }
.footer p svg { display: inline-block; width: 18px; height: 18px; vertical-align: -3px; }
```
